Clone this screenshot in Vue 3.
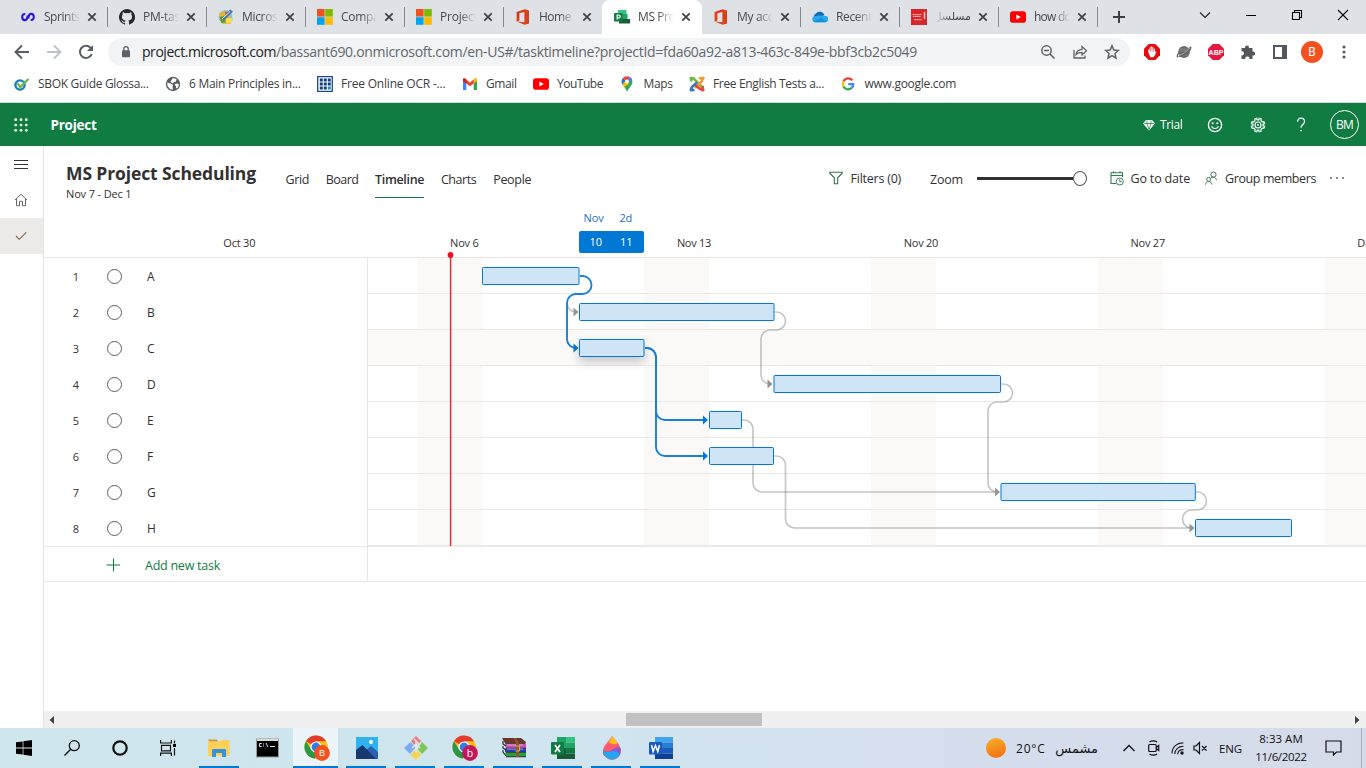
<script setup>
import { h } from 'vue'

/* Inner markup of the icons; every entry is [viewBox width, viewBox height, markup]. */
const ms = '<path fill="#f25022" d="M0 0h7.6v7.6H0z"/><path fill="#7fba00" d="M8.2 0h7.6v7.6H8.2z"/><path fill="#00a4ef" d="M0 8.2h7.6v7.6H0z"/><path fill="#ffb900" d="M8.2 8.2h7.6v7.6H8.2z"/>'
const yt = '<rect x="0" y="2.3" width="16" height="11.4" rx="2.8" fill="#f00"/><path fill="#fff" d="M6.4 5.4v5.2L10.8 8z"/>'
const office = '<path fill="#dc3e15" d="M9.6.2 1.6 3v9.8l2.8-1.2V4.2l5-1.2v10.3l-7.6-.9 7.8 3.4 4.4-1.3V1.5z"/>'
const chrome = '<circle cx="12" cy="12" r="11.6" fill="#fbc116"/><path fill="#e33b2e" d="M12 12 2 6.2A11.6 11.6 0 0 1 22.2 6.4H12z"/><path fill="#279847" d="M2 6.2A11.6 11.6 0 0 0 11 23.6L16.8 14 12 12 7.2 14.8z"/><path fill="#fbc116" d="M12 6.4h10.2A11.6 11.6 0 0 1 11 23.6L16.8 14z"/><circle cx="12" cy="12" r="5.6" fill="#fff"/><circle cx="12" cy="12" r="4.4" fill="#2f7de9"/>'
const icons = {
  sprints: [16, 16, '<g fill="none" stroke="#2a16e0" stroke-width="2.100"><path d="M5.300 5C3 4.900 2.200 6 2.200 8s.8 3.100 2.500 3.100c1.500 0 2.200-.8 2.500-2.100l.6-2.500"/><path d="M10.700 11c2.300.1 3.100-1 3.100-3s-.8-3.100-2.500-3.100c-1.500 0-2.200.8-2.500 2.100l-.6 2.500"/></g>'],
  github: [16, 16, '<path fill="#24292f" d="M8 0a8 8 0 0 0-2.530 15.590c.4.070.55-.17.55-.38v-1.340c-2.230.48-2.700-1.070-2.700-1.070-.36-.92-.89-1.170-.89-1.170-.73-.5.050-.49.050-.49.810.060 1.230.83 1.230.83.720 1.230 1.880.87 2.340.67.070-.52.280-.88.500-1.080-1.780-.2-3.640-.89-3.640-3.950 0-.87.310-1.590.820-2.150-.080-.2-.360-1.020.080-2.120 0 0 .67-.21 2.200.82a7.600 7.600 0 0 1 4 0c1.530-1.040 2.200-.82 2.200-.82.440 1.100.160 1.920.080 2.120.510.560.820 1.270.820 2.150 0 3.070-1.870 3.750-3.650 3.950.290.250.540.730.540 1.480v2.190c0 .21.150.46.550.38A8 8 0 0 0 8 0z"/>'],
  msold: [16, 16, '<circle cx="7.500" cy="8" r="6.900" fill="#7cc7ee"/><path fill="#e9b32c" d="M1 4 8 2l5 3-2 3 4 2-3 5-8-.5-2-4.500z"/><path fill="#5b9d34" d="m1.500 8 5-1 1 6.500-4 .5z"/><path fill="#d7483a" d="m7 2.500 4 1-3 4z"/><path d="m4 10 8-9.500 3 2-8.500 8.500z" fill="#3b76b5"/><path d="m4 10 8-7.500" stroke="#e6f4fb" stroke-width="1"/><path fill="#f7dc5a" d="m8 9.500 6-.5.5 4-6 2z"/>'],
  ms: [16, 16, ms],
  office: [16, 16, office],
  project: [16, 16, '<path fill="#31c685" d="M4 1h8.500v5H4z"/><path fill="#21a366" d="M6 5h7.500v5H6z"/><path fill="#185c37" d="M5 10h11v4.500H5z"/><rect y="4" width="8.500" height="8.500" rx=".8" fill="#107c41"/><path d="M3.200 10.400V6h1.600a1.300 1.300 0 0 1 0 2.800H3.200" fill="none" stroke="#fff" stroke-width="1.200"/>'],
  onedrive: [16, 16, '<path fill="#0f6cbd" d="M3 11a4 4 0 0 1 1-6.500A5 5 0 0 1 12.500 6z"/><path fill="#28a8ea" d="M2.800 13.300A3 3 0 0 1 2 7.600l5-1 7 .4a3.200 3.200 0 0 1-.8 6.300z"/><path fill="#1490df" d="m2.800 13.300-1.400-.6L9 9l5.500 3.800-1.300.5z"/>'],
  red: [16, 16, '<path fill="#d8262c" d="M0 0h16v16H0z"/><path d="M1.500 5.500h9M2 7.300h8M3.500 10.700h7.500" stroke="#f5b5b0" stroke-width="1.200" stroke-dasharray="1.500 .4"/><path d="M13.500 3v7" stroke="#f8d7a8" stroke-width="1.500"/>'],
  youtube: [16, 16, yt],
  close: [10, 10, '<path d="m1.300 1.300 7.400 7.400M8.700 1.300 1.300 8.700" stroke="#3c4043" stroke-width="1.700"/>'],
  plus: [14, 14, '<path d="M7 1v12M1 7h12" stroke="#3c4043" stroke-width="2"/>'],
  chevDown: [12, 12, '<path d="m1 3.500 5 5 5-5" fill="none" stroke="#222" stroke-width="1.100"/>'],
  min: [12, 12, '<path d="M1 6.500h10" stroke="#000"/>'],
  restore: [12, 12, '<path d="M1.500 3.500h7v7h-7zM3.500 3.500v-2h7v7h-2" fill="none" stroke="#000" stroke-width="1.100"/>'],
  winClose: [12, 12, '<path d="m1 1 10 10M11 1 1 11" stroke="#000" stroke-width="1.100"/>'],
  back: [16, 16, '<path d="M15 8H2M8 1.500 1.500 8 8 14.500" fill="none" stroke="#5a5e63" stroke-width="1.900"/>'],
  forward: [16, 16, '<path d="M1 8h13M8 1.500 14.500 8 8 14.500" fill="none" stroke="#bdc1c5" stroke-width="1.800"/>'],
  reload: [16, 16, '<path d="M13.700 10.200A6.100 6.100 0 1 1 12.600 3.800L14 5.500" fill="none" stroke="#5a5e63" stroke-width="2"/><path fill="#5a5e63" d="M15 1v6H9z"/>'],
  lock: [12, 14, '<rect x="2" y="5.300" width="8" height="7" rx="1" fill="#5f6368"/><path d="M3.800 6V3.800a2.200 2.200 0 0 1 4.400 0V6" fill="none" stroke="#5f6368" stroke-width="1.300"/>'],
  zoomOut: [16, 16, '<circle cx="6.500" cy="6.500" r="4.700" fill="none" stroke="#5f6368" stroke-width="1.500"/><path d="m10 10 4.500 4.500M4 6.500h5" stroke="#5f6368" stroke-width="1.600"/>'],
  share: [16, 16, '<path d="M2 6v8h11v-2.500" fill="none" stroke="#5f6368" stroke-width="1.300"/><path d="M4 10.500c.5-3.500 2.500-5 6-5.200V2.500l4.500 4.300L10 11V8.300c-2.500 0-4.500.5-6 2.200z" fill="none" stroke="#5f6368" stroke-width="1.200"/>'],
  star: [16, 16, '<path d="m8 1.800 1.800 4.300 4.600.4-3.500 3 1.100 4.600-4-2.500-4 2.500 1.100-4.600-3.500-3 4.600-.4z" fill="none" stroke="#5f6368" stroke-width="1.500"/>'],
  adblock: [16, 16, '<path fill="#e30b0b" d="M4.700 0h6.600L16 4.700v6.600L11.300 16H4.700L0 11.300V4.700z"/><path fill="#fff" d="M4.300 8V5.500h1.300V3.500h1.300v-1h1.400v1h1.400v1.200H11V8l1.700-.7-1.800 4-1.500 2H6.300z"/><path d="M6.500 4v3.500M8 3.500v4M9.500 4v3.500" stroke="#e30b0b" stroke-width=".5"/>'],
  planet: [16, 16, '<circle cx="8" cy="8" r="5.900" fill="#6b6b6b"/><path d="M4 5h8M3 7h9M4 11h8" stroke="#858585" stroke-width="1"/><path d="M2.500 12.500C0 14 1.500 10 3 9M13.500 3.500C16 2 14.500 6 13 7M3 12.500c4-.5 9-4 10.500-8" fill="none" stroke="#5e5e5e" stroke-width="1.200"/><path d="M2.500 11.300c4-.5 8.500-3.500 10.500-6.800" fill="none" stroke="#c4c4c4" stroke-width=".6"/>'],
  abp: [16, 16, '<path fill="#e91641" d="M4.700 0h6.600L16 4.700v6.600L11.300 16H4.700L0 11.300V4.700z"/><text x="8" y="10.600" font-family="Liberation Sans,sans-serif" font-weight="700" font-size="7" text-anchor="middle" fill="#fff">ABP</text>'],
  puzzle: [16, 16, '<path fill="#54585d" d="M1.500 4h3.600a2 2 0 1 1 3.800 0h3.600v3.700a2 2 0 1 1 0 3.800V15H9.300a2 2 0 1 0-3.900 0H1.500v-3.700a2 2 0 1 0 0-3.900z"/>'],
  panel: [16, 16, '<path d="M2 2h12v12H2z" fill="none" stroke="#54585d" stroke-width="2"/><path fill="#54585d" d="M10 2h4v12h-4z"/>'],
  menuDots: [16, 16, '<g fill="#54585d"><circle cx="8" cy="3" r="1.500"/><circle cx="8" cy="8" r="1.500"/><circle cx="8" cy="13" r="1.500"/></g>'],
  sbok: [16, 16, '<circle cx="6" cy="9" r="4.600" fill="none" stroke="#1c7bb9" stroke-width="2.400"/><path d="m3.500 7.500 2.800 3.500L14.500 3" fill="none" stroke="#65b946" stroke-width="2.200"/>'],
  globe: [16, 16, '<circle cx="8" cy="8" r="7.200" fill="#5a5d61"/><path fill="#fff" d="M2.200 6.500 5.500 7.500 8 9l-.5 2 .5 2.800-3-.8L2.500 10zM8 2l3.500 1-.5 2.500L9 6l-1 1.500L5.500 6l1-2zM9.500 8l3-.5 1.500 1-1 3-2 1V10.500z"/>'],
  ocr: [16, 16, '<path fill="#fff" stroke="#1b4b8f" stroke-width="1.300" d="M.7.700h14.600v14.600H.7z"/><path fill="#123f7c" d="M2.800 2.500h3v3h-3zm4 0h3v3h-3zm4 0h3v3h-3zm-8 4h3v3h-3zm4 0h3v3h-3zm4 0h3v3h-3zm-8 4h3v3h-3zm4 0h3v3h-3z"/><path fill="#24978f" d="M10.800 10.500h3v3h-3z"/>'],
  gmail: [16, 16, '<path fill="#4285f4" d="M1 14V4.500l3.300 2.500v7z"/><path fill="#34a853" d="M11.700 14V7L15 4.500V14z"/><path fill="#ea4335" d="M1 5V3.200L2.700 2.300 8 6.500l5.300-4.200L15 3.200V5L8 10.300z"/><path fill="#c5221f" d="M1 3.500c0-1.600 1.600-1.600 2.300-.8l1 .8V7.500L1 5z"/><path fill="#fbbc04" d="M15 3.500c0-1.600-1.600-1.600-2.300-.8l-1 .8v4L15 5z"/>'],
  maps: [16, 16, '<path fill="#34a853" d="M8 16c-.7-2-1.400-3.500-3-5.200L12.800 3.200c1.400 3 .3 5.200-1.300 7.300C9.800 12.700 8.800 14 8 16z"/><path fill="#fbbc04" d="M5 10.800 3 8l5-4 2.200 4z"/><path fill="#1a73e8" d="m3.800 2 3 2.500-3.500 4C2 6 2.500 3.500 3.800 2z"/><path fill="#4285f4" d="M8 4.500 11.200 1c1 .6 1.600 1.500 2 2.700L9.500 7.500z"/><path fill="#ea4335" d="M3.800 2.100C5.500 0 9-.5 11.300 1L7.500 5z"/><circle cx="8" cy="5.500" r="1.900" fill="#fff"/>'],
  joomla: [16, 16, '<g fill="none" stroke-width="2.600"><path d="M2.500 5.500c-1-2.500 1.500-4 3-2.200L13 11" stroke="#73b843"/><path d="M10 2.500c2.500-1 4 1 3 2.500L6 12" stroke="#f29c32"/><path d="m6 9 4.500 3.500c1.500 1.500 4-.2 3-2.500" stroke="#e74838"/><path d="M8 6.500 3 11c-1.500 1.500.2 3.700 2.500 2.800" stroke="#3c79bd"/></g><g><circle cx="2.300" cy="2.300" r="1.900" fill="#73b843"/><circle cx="13.700" cy="2.300" r="1.900" fill="#f29c32"/><circle cx="2.300" cy="13.700" r="1.900" fill="#3c79bd"/><circle cx="13.700" cy="13.700" r="1.900" fill="#e74838"/></g>'],
  google: [16, 16, '<g fill="none" stroke-width="2.300"><path d="M12.300 4.300A5.200 5.200 0 0 0 3.500 5.400" stroke="#ea4335"/><path d="M3.500 5.400a5.200 5.200 0 0 0 0 5.200" stroke="#fbbc04"/><path d="M3.500 10.600a5.200 5.200 0 0 0 8.200 1.300" stroke="#34a853"/><path d="M11.700 11.900A5.200 5.200 0 0 0 13.200 8.200H8.200" stroke="#4285f4"/></g>'],
  waffle: [14, 14, '<g fill="#fff"><circle cx="1.700" cy="1.700" r="1.350"/><circle cx="7" cy="1.700" r="1.350"/><circle cx="12.300" cy="1.700" r="1.350"/><circle cx="1.700" cy="7" r="1.350"/><circle cx="7" cy="7" r="1.350"/><circle cx="12.300" cy="7" r="1.350"/><circle cx="1.700" cy="12.300" r="1.350"/><circle cx="7" cy="12.300" r="1.350"/><circle cx="12.300" cy="12.300" r="1.350"/></g>'],
  diamond: [12, 12, '<path fill="#fff" d="M3 1h6l3 3.500L6 11.500 0 4.500z"/><path d="M1 4.500h10M4 1.500l0 3 2 6 2-6v-3" fill="none" stroke="#107c41" stroke-width=".7"/>'],
  smile: [16, 16, '<circle cx="8" cy="8" r="6.600" fill="none" stroke="#fff" stroke-width="1.300"/><circle cx="5.700" cy="6.200" r="1" fill="#fff"/><circle cx="10.300" cy="6.200" r="1" fill="#fff"/><path d="M4.500 9.300c1.500 2.900 5.500 2.900 7 0" fill="none" stroke="#fff" stroke-width="1.200"/>'],
  gear: [16, 16, '<path d="m6.800 1.300.4 1.600h1.600l.4-1.600 1.900.6-.1 1.700 1.200 1.200 1.700-.1.700 1.900-1.600.5v1.700l1.600.5-.7 1.900-1.700-.1-1.200 1.200.1 1.700-1.900.7-.5-1.600H7.300l-.5 1.600-1.900-.7.100-1.700-1.200-1.200-1.700.1-.7-1.900 1.600-.5V7.100l-1.600-.5.700-1.900 1.700.1L5 3.600l-.1-1.700z" fill="none" stroke="#fff" stroke-width="1.200"/><circle cx="8" cy="8" r="3" fill="none" stroke="#fff" stroke-width="1.100"/><circle cx="8" cy="8" r=".9" fill="#fff"/>'],
  help: [12, 16, '<path d="M2.600 4.800C2.600 2.500 4 1.200 6 1.200S9.500 2.500 9.500 4.500C9.500 7.500 6 7.500 6 10.800" fill="none" stroke="#fff" stroke-width="1.200"/><circle cx="6" cy="13.600" r=".9" fill="#fff"/>'],
  burger: [14, 12, '<path d="M0 2.500h14M0 6.500h14M0 10.500h14" stroke="#333" stroke-width="1"/>'],
  home: [14, 14, '<path d="M1 7 7 1.300 13 7M2.500 6v6.700h3V8.300h3v4.400h3V6" fill="none" stroke="#666" stroke-width="1"/>'],
  check: [12, 10, '<path d="m1 5 3.300 3.300L11.300 1.300" fill="none" stroke="#7a6248" stroke-width="1.100"/>'],
  filter: [14, 14, '<path d="M.8 1.200h12.400v1L8.700 6.800v6H5.300v-6L.8 2.200z" fill="none" stroke="#34724e" stroke-width="1.100"/>'],
  calendar: [14, 15, '<path d="M6 12.500H1V1.700h11.500V6M1 4.500h11.500M3.500.3v2M10 .3v2" fill="none" stroke="#2f7d52" stroke-width="1.100"/><circle cx="9.800" cy="10.500" r="3.500" fill="#fff" stroke="#3d7d5a" stroke-width="1"/><path d="M9.800 8.300v2.400h1.800" fill="none" stroke="#3d7d5a"/>'],
  people: [12, 14, '<g fill="none" stroke="#3f7658" stroke-width="1"><circle cx="8.500" cy="3.600" r="2.600"/><path d="M6 6.800c2.500-1.500 5-.3 5.500 2.500"/><circle cx="3.700" cy="8.400" r="2"/><path d="M.5 13.500c.3-4 6-4 6.300 0"/></g>'],
  arrL: [5, 8, '<path fill="#444" d="M5 0v8L.5 4z"/>'],
  arrR: [5, 8, '<path fill="#444" d="M0 0v8l4.500-4z"/>'],
  win: [16, 16, '<path d="M0 2.300 6.700 1.400v6.200H0zM7.400 1.300 16 0v7.600H7.400zM0 8.400h6.700v6.200L0 13.700zM7.400 8.400H16V16l-8.600-1.200z"/>'],
  search: [16, 16, '<circle cx="10.300" cy="5.700" r="5" fill="none" stroke="#111" stroke-width="1.300"/><path d="M6.700 9.300.5 15.500" stroke="#111" stroke-width="1.400"/>'],
  cortana: [16, 16, '<circle cx="8" cy="8" r="6.700" fill="none" stroke="#111" stroke-width="2.200"/>'],
  taskview: [16, 16, '<path d="M.6 0v3h10.800V0M1.500 5.300h9v5.500h-9zM.6 16v-2.800h10.800V16M14.500.5v3M14.500 8v7.500" fill="none" stroke="#111" stroke-width="1.200"/><path d="M13 4h3v3h-3z"/>'],
  explorer: [22, 20, '<path fill="#d99a13" d="M0 1.500h9l1.500 2h-9.500z"/><path fill="#fcd059" d="M0 4h11l1.500-2H21.500V18H0z"/><path fill="#3394dc" d="M4 12.500c0-1 .5-1.500 1.500-1.500h11c1 0 1.500.5 1.500 1.500V19h-4v-4H8v4H4z"/>'],
  cmd: [23, 20, '<path fill="#999" d="M0 .5h23v19H0z"/><path d="M1 3h21v15.500H1z"/><path fill="#d9d9d9" d="M1 1h21v2H1z"/><path d="M5.700 5.500H3.500v3h2.200M7.500 5.500v1M7.500 7.500v1M10 5l2 4M14 8.500h5" fill="none" stroke="#ddd" stroke-width="1"/>'],
  chromeB: [26, 26, chrome + '<circle cx="18" cy="18" r="7.900" fill="#f4511e"/><text x="18" y="21.200" font-family="Liberation Sans,sans-serif" font-size="9" text-anchor="middle" fill="#fff">B</text>'],
  chromeb: [26, 26, chrome + '<circle cx="18" cy="18" r="7.900" fill="#c2185b"/><text x="18" y="21.500" font-family="Open Sans,sans-serif" font-size="10.500" text-anchor="middle" fill="#fff">b</text>'],
  photos: [22, 22, '<path fill="#30b2ef" d="M0 0h22v22H0z"/><path fill="#2f5fb2" d="m10 13 5-4 7 6v7H10z"/><path fill="#18396f" d="m0 13 6.500-5L20 22H0z"/><circle cx="15" cy="5" r="2" fill="#fff"/>'],
  git: [24, 24, '<g><path fill="#f2797a" d="m12 0 5 5-4.500 5H11L7 5z"/><path fill="#7cabf5" d="m6.500 6 5 5.500L6 18 0 12z"/><path fill="#7dc855" d="m18 6 6 6-6 6-4-4.500 1-3.500z"/><path fill="#f6d353" d="m12 12.500 5 6.500-5 5-5.500-5z"/><path d="m10 3 6 6M12 6v11M8 12l4-4 4 4" fill="none" stroke="#dfeaf0" stroke-width="1.500"/></g>'],
  winrar: [24, 20, '<path fill="#68372b" d="M0 0h19l5 4-1 3H4z"/><path fill="#c652b6" d="M3 6h21v4H4z"/><path fill="#2941c8" d="M3 10.500h21v3.500H3z"/><path fill="#22a332" d="M3 14.500h21v4H4z"/><path d="M1 3v3l3 2M1 8v2l3 2M1 12v2l3 4M4 10.300h20M4 14.300h20M4 18.800h20" fill="none" stroke="#222" stroke-width="1.100"/><path d="M5 7h16M5 11h16" stroke="#e9c0e0" stroke-width=".7"/><path fill="#8a5830" d="m12 0 2 0 3 5v14h-3V6z"/><path d="M13.500 8h4v5h-4" fill="none" stroke="#d5b048"/>'],
  excel: [24, 22, '<path fill="#21a366" d="M6 0h9v11H6z"/><path fill="#33c481" d="M15 0h9v5.500h-9z"/><path fill="#21a366" d="M15 5.500h9V11h-9z"/><path fill="#107c41" d="M15 11h9v5.500h-9z"/><path fill="#185c37" d="M6 11h9v5.500h9V22H6z"/><rect y="5" width="13" height="12.500" rx="1" fill="#107c41"/><path d="m4 8 5 7M9 8l-5 7" stroke="#fff" stroke-width="1.700"/>'],
  paint: [20, 24, '<path fill="#ff5b6d" d="M10 0c3 4 9 9 9 15a9 9 0 0 1-18 0C1 9 8 5 10 0z"/><path fill="#ffc40c" d="M10 0c2 3 4 4.500 5.500 7-3 2.500-6 .5-9-.5C8 4.500 9.500 2.500 10 0z"/><path fill="#8b58cc" d="M18.800 13c-2-4-6-1-9 1-3 2-6 2-8.800 0 0 3 0 4 1 6l16-1z"/><path fill="#21a6f2" d="M1 14.500c4 3 7 1 10 .5 3 0 5 1 7 3.500A9 9 0 0 1 1 14.500z"/>'],
  word: [24, 22, '<path fill="#41a5ee" d="M6 0h18v5.500H6z"/><path fill="#2b7cd3" d="M6 5.500h18V11H6z"/><path fill="#185abd" d="M6 11h18v5.500H6z"/><path fill="#103f91" d="M6 16.500h18V22H6z"/><rect y="5" width="13" height="12.500" rx="1" fill="#185abd"/><path d="m2.500 8 1.600 6.500L6.500 8.500l2.300 6L10.500 8" fill="none" stroke="#fff" stroke-width="1.500"/>'],
  chevUp: [14, 14, '<path d="M1.500 10 7 4.500l5.500 5.500" fill="none" stroke="#111" stroke-width="1.300"/>'],
  meet: [14, 16, '<g fill="none" stroke="#111" stroke-width="1.200"><rect x="1.700" y="4.500" width="7.500" height="7" rx="1"/><path d="M9.200 7.500 11.700 5.500v5L9.200 8.500M2.500 2C4.500.5 8 .5 10 2M2.500 14c2 1.500 5.500 1.500 7.500 0"/></g>'],
  wifi: [14, 14, '<g fill="none" stroke="#222" stroke-width="1.200"><path d="M1 12.500C1 6 6 1.500 12.500 2M3.800 13c0-4.500 4-8 8.700-7.500M6.700 13.300c0-3 2.300-5 5.800-4.700"/></g><circle cx="11" cy="12" r="1.700" fill="#111"/>'],
  mute: [15, 14, '<path d="M1 5v4h2l3.500 3.500v-11L3 5zM9 5l4.500 4.500M13.500 5 9 9.500" fill="none" stroke="#111" stroke-width="1.200"/>'],
  notif: [17, 16, '<path d="M1 1h15v11h-4.500L8.500 15v-3H1z" fill="none" stroke="#111" stroke-width="1.200"/>'],
  add: [14, 14, '<path d="M7.500 .5v13M.5 7h13.500" stroke="#107c41" stroke-width="1"/>'],
}

const Icon = ({ name, w }) => {
  const [vw, vh, body] = icons[name]
  const width = w || vw
  return h('svg', { viewBox: `0 0 ${vw} ${vh}`, width, height: (width * vh) / vw, innerHTML: body })
}
Icon.props = ['name', 'w']

/* Tracks a label so that it takes exactly the given number of pixels. */
const vFit = {
  mounted(el, { value }) {
    const range = document.createRange()
    range.selectNodeContents(el)
    const gap = value - range.getBoundingClientRect().width
    el.style.letterSpacing = `${gap / el.textContent.length}px`
  },
}

const tabs = [
  ['sprints', 'Sprints', 36], ['github', 'PM-task', 43], ['msold', 'Microsoft', 50], ['ms', 'Company', 51], ['ms', 'Project', 37.500],
  ['office', 'Home', 32], ['project', 'MS Proj', 40], ['office', 'My acco', 43], ['onedrive', 'Recent', 36], ['red', 'مسلسل', 0], ['youtube', 'how do', 37],
]
const bookmarks = [
  ['sbok', 'SBOK Guide Glossa...', 110.5], ['globe', '6 Main Principles in...', 111.5], ['ocr', 'Free Online OCR -...', 104.5], ['gmail', 'Gmail', 30.5],
  ['youtube', 'YouTube', 46], ['maps', 'Maps', 29], ['joomla', 'Free English Tests a...', 111], ['google', 'www.google.com', 91.5],
]
const views = [['Grid', 23.500], ['Board', 32.500], ['Timeline', 49], ['Charts', 35.500], ['People', 38]]
const weeks = [['Oct 30', 32], ['Nov 6', 28.500], ['Nov 13', 34], ['Nov 20', 34.500], ['Nov 27', 34.500], ['Dec 4', 29]]
const tasks = ['A', 'B', 'C', 'D', 'E', 'F', 'G', 'H']
const weekends = [417.500, 644.200, 871, 1097.800, 1324.700]
const bars = [[482.5, 96.5], [579.5, 194.5], [579.5, 64.5], [774, 226.5], [709.500, 32], [709.500, 64], [1001, 194.300], [1195.500, 96]]
const links = [
  'M775 312h1.500a9 9 0 0 1 0 18H770a9 9 0 0 0-9 9V375a9 9 0 0 0 9 9',
  'M567 303a9 9 0 0 0 9 9',
  'M1001 384h2.500a9 9 0 0 1 0 18H997a9 9 0 0 0-9 9V483a9 9 0 0 0 9 9',
  'M742 420h2a9 9 0 0 1 9 9V483a9 9 0 0 0 9 9H997',
  'M774 456h2.500a9 9 0 0 1 9 9V519a9 9 0 0 0 9 9H1190',
  'M1196 492h1.500a9 9 0 0 1 0 18H1191.500a9 9 0 0 0 0 18',
]
const activeLinks = [
  'M580 276h2.500a9 9 0 0 1 0 18H576a9 9 0 0 0-9 9V339a9 9 0 0 0 9 9',
  'M645 348h2.500a9 9 0 0 1 8.500 9V411a9 9 0 0 0 9 9H705',
  'M645 348h2.500a9 9 0 0 1 8.500 9V447a9 9 0 0 0 9 9H705',
]
const arrows = [[578.5, 312], [772.5, 384], [1000, 492], [1194.5, 528]]
const activeArrows = [[578.5, 348], [708, 420], [708, 456]]
const apps = [['explorer', 22, 1], ['cmd', 23, 0], ['chromeB', 26, 2], ['photos', 22, 1], ['git', 24, 1], ['chromeb', 26, 1], ['winrar', 24, 1], ['excel', 24, 1], ['paint', 20, 1], ['word', 24, 1]]
</script>

<template>
  <div class="screen">
    <header class="tabstrip">
      <div v-for="(t, i) in tabs" :key="i" class="tab" :class="{ active: i === 6, before: i === 5 }">
        <Icon class="fav" :name="t[0]" :w="16" />
        <span class="tab-title" :class="{ rtl: !t[2] }"><b v-if="t[2]" v-fit="t[2]">{{ t[1] }}</b><b v-else>{{ t[1] }}</b></span>
        <Icon name="close" />
      </div>
      <Icon class="newtab" name="plus" />
      <div class="wincontrols"><Icon name="chevDown" /><Icon name="min" /><Icon name="restore" /><Icon name="winClose" /></div>
    </header>

    <div class="toolbar">
      <div class="nav"><Icon name="back" /><Icon name="forward" /><Icon name="reload" /></div>
      <div class="omnibox">
        <Icon name="lock" />
        <span class="url"><b v-fit="134">project.microsoft.com</b><i v-fit="641">/bassant690.onmicrosoft.com/en-US#/tasktimeline?projectId=fda60a92-a813-463c-849e-bbf3cb2c5049</i></span>
        <span class="omni-icons"><Icon name="zoomOut" /><Icon name="share" /><Icon name="star" /></span>
      </div>
      <div class="ext">
        <Icon name="adblock" /><Icon name="planet" /><Icon name="abp" /><Icon name="puzzle" /><Icon name="panel" />
        <span class="profile">B</span><Icon name="menuDots" />
      </div>
    </div>

    <div class="bookmarks">
      <a v-for="b in bookmarks" :key="b[1]"><Icon :name="b[0]" :w="16" /><span v-fit="b[2]">{{ b[1] }}</span></a>
    </div>

    <div class="suite">
      <Icon name="waffle" />
      <strong v-fit="46">Project</strong>
      <span class="trial"><Icon name="diamond" /><span v-fit="22.5">Trial</span></span>
      <Icon name="smile" /><Icon name="gear" /><Icon name="help" class="s-help" />
      <span class="me"><span v-fit="17">BM</span></span>
    </div>

    <div class="body">
      <nav class="rail">
        <span><Icon name="burger" /></span><span><Icon name="home" /></span><span class="sel"><Icon name="check" /></span>
      </nav>
      <main>
        <div class="head">
          <div class="title">
            <h1 v-fit="190">MS Project Scheduling</h1>
            <p v-fit="65.5">Nov 7 - Dec 1</p>
          </div>
          <div class="views">
            <span v-for="v in views" :key="v[0]" :class="{ on: v[0] === 'Timeline' }"><b v-fit="v[1]">{{ v[0] }}</b></span>
          </div>
          <div class="actions">
            <Icon name="filter" /><span v-fit="50.5" class="a-filter">Filters (0)</span>
            <span v-fit="33" class="a-zoom">Zoom</span>
            <span class="slider"><i></i><u></u></span>
            <Icon name="calendar" /><span v-fit="59.5" class="a-date">Go to date</span>
            <Icon name="people" /><span v-fit="91" class="a-group">Group members</span>
            <span class="more"><i></i><i></i><i></i></span>
          </div>
        </div>

        <div class="scale">
          <span v-for="w in weeks" :key="w[0]"><b v-fit="w[1]">{{ w[0] }}</b></span>
          <div class="range">
            <div class="range-top"><b v-fit="20">Nov</b><b v-fit="12.5">2d</b></div>
            <div class="range-days"><b>10</b><b>11</b></div>
          </div>
        </div>

        <div class="plan">
          <div class="list">
            <div v-for="(t, i) in tasks" :key="t" class="task"><span class="num">{{ i + 1 }}</span><span class="ring"></span><span>{{ t }}</span></div>
            <div class="add"><Icon name="add" /><span v-fit="75">Add new task</span></div>
          </div>
          <div class="chart">
            <svg class="gantt" viewBox="368 258 998 324" width="998" height="324">
              <rect v-for="x in weekends" :key="x" :x="x" y="258" width="65" height="287" fill="#faf9f8" />
              <rect x="368" y="330" width="998" height="35" fill="#faf9f8" />
              <rect v-for="n in 7" :key="n" x="368" :y="257 + n * 36" width="998" height="1" fill="#eae9e8" />
              <rect x="368" y="545" width="998" height="2" fill="#eae9e8" />
              <g fill="none" stroke="#737373" stroke-opacity=".42" stroke-width="1.600">
                <path v-for="d in links" :key="d" :d="d" />
              </g>
              <path v-for="a in arrows" :key="a[0]" :d="`M${a[0]} ${a[1]}l-5-4.500v9z`" fill="#979593" />
              <g fill="none" stroke="#1a7fd9" stroke-width="1.900">
                <path v-for="d in activeLinks" :key="d" :d="d" />
              </g>
              <path v-for="a in activeArrows" :key="a[1]" :d="`M${a[0]} ${a[1]}l-5-4.500v9z`" fill="#0078d4" />
              <rect v-for="(b, i) in bars" :key="i" class="bar" :class="{ hot: i === 2 }" :x="b[0]" :y="267.5 + i * 36" :width="b[1]" height="17" rx="1" />
              <rect x="449.900" y="255" width="1.400" height="291" fill="#f0222d" />
              <circle cx="450.500" cy="255" r="2.900" fill="#e81123" />
            </svg>
          </div>
        </div>

        <div class="hscroll"><Icon name="arrL" /><i></i><Icon name="arrR" /></div>
      </main>
    </div>

    <footer class="taskbar">
      <div class="sys"><span><Icon name="win" /></span><span><Icon name="search" /></span><span><Icon name="cortana" /></span><span><Icon name="taskview" /></span></div>
      <div class="apps">
        <span v-for="a in apps" :key="a[0]" :class="['app', 'm' + a[2], a[0]]"><Icon :name="a[0]" :w="a[1]" /></span>
      </div>
      <div class="tray">
        <i class="sun"></i><span v-fit="29.5" class="temp">20°C</span><span class="ar">مشمس</span>
        <Icon name="chevUp" /><Icon name="meet" class="t-meet" /><Icon name="wifi" class="t-wifi" /><Icon name="mute" class="t-mute" />
        <span v-fit="23" class="lang">ENG</span>
        <span class="clock"><b v-fit="43.5">8:33 AM</b><b v-fit="51.5">11/6/2022</b></span>
        <Icon name="notif" class="t-notif" /><i class="peek"></i>
      </div>
    </footer>
  </div>
</template>

<style>
body { overflow: hidden; background: #fff; }
</style>

<style scoped>
.screen { width: 1366px; height: 768px; overflow: hidden; display: flex; flex-direction: column; background: #fff; font-family: "Open Sans", "Noto Sans", "DejaVu Sans", sans-serif; font-size: 12px; color: #323130; white-space: nowrap; }
.screen * { box-sizing: border-box; }
svg { flex: none; display: block; }
b, i, u { font-weight: inherit; font-style: normal; text-decoration: none; }

.tabstrip { height: 34px; flex: none; background: #dee1e6; display: flex; align-items: center; padding-left: 8px; }
.tab { position: relative; width: 99px; height: 34px; flex: none; display: flex; align-items: center; padding-left: 12px; color: #45494d; }
.tab::after { content: ""; width: 1px; height: 20px; background: #85888c; position: absolute; right: -1px; top: 7px; }
.tab.before::after, .tab.active::after { display: none; }
.tab.active { background: #fff; border-radius: 8px 8px 0 0; width: 100px; margin-left: 0; margin-right: -1px; }
.tab-title { width: 36px; margin-left: 8px; margin-right: 7px; overflow: hidden; line-height: 20px; -webkit-mask-image: linear-gradient(90deg, #000 55%, transparent 100%); mask-image: linear-gradient(90deg, #000 55%, transparent 100%); }
.tab-title.rtl { direction: rtl; font-family: "DejaVu Sans", sans-serif; font-size: 11px; -webkit-mask-image: linear-gradient(270deg, #000 55%, transparent 100%); mask-image: linear-gradient(270deg, #000 55%, transparent 100%); }
.newtab { margin-left: 15px; }
.wincontrols { display: flex; gap: 34px; margin-left: auto; margin-right: 17px; margin-bottom: 5px; }

.toolbar { height: 36px; flex: none; display: flex; align-items: center; padding-left: 14px; }
.nav { display: flex; gap: 16px; width: 94px; }
.omnibox { width: 1022px; height: 28px; border-radius: 14px; background: #f1f3f4; display: flex; align-items: center; padding-left: 12px; }
.url { margin-left: 10px; font-size: 14px; color: #63676b; line-height: 20px; }
.url b { color: #202124; }
.omni-icons { display: flex; gap: 16px; margin-left: auto; margin-right: 10px; }
.ext { display: flex; align-items: center; gap: 16px; margin-left: 14px; }
.profile { width: 22px; height: 22px; margin: 0 -3px; border-radius: 50%; background: #f4511e; color: #fff; font: 12px/22px Roboto, sans-serif; text-align: center; }

.bookmarks { height: 32px; flex: none; display: flex; align-items: center; gap: 16.500px; padding-left: 13.500px; padding-bottom: 4px; color: #3c4043; }
.bookmarks a { display: flex; align-items: center; gap: 8.500px; line-height: 18px; margin-right: -.5px; }

.suite { height: 44px; flex: none; border-top: 1px solid #d7dadd; background: #107c41; color: #fff; display: flex; align-items: center; padding-left: 14px; padding-right: 7px; }
.suite strong { font-size: 13.500px; font-weight: 700; margin-left: 22.500px; margin-right: auto; width: 52px; line-height: 20px; margin-top: 1px; }
.trial { display: flex; align-items: center; gap: 5px; width: 64px; }
.suite .me { width: 29px; height: 29px; border: 1px solid #fff; border-radius: 50%; display: flex; justify-content: center; align-items: center; margin-left: 23px; font-size: 12px; }
.suite > svg + svg { margin-left: 27px; }
.suite > svg + svg.s-help { margin-left: 29px; }

.body { flex: 1; display: flex; min-height: 0; }
.rail { width: 44px; border-right: 1px solid #e6e5e4; }
.rail span { display: flex; height: 36px; width: 43px; padding-right: 1px; align-items: center; justify-content: center; }
.rail .sel { background: #edebe9; }
main { flex: 1; min-width: 0; display: flex; flex-direction: column; }

.head { height: 60px; display: flex; padding-left: 22px; }
.title { width: 219.500px; padding-top: 15px; }
.title h1 { margin: 0; font-size: 17.500px; font-weight: 700; line-height: 24px; }
.title p { margin: 1px 0 0; font-size: 11px; line-height: 16px; }
.views { display: flex; gap: 16.800px; padding-top: 25px; font-size: 12.500px; line-height: 18px; }
.views span { height: 27px; }
.views .on { border-bottom: 1px solid #107c41; font-weight: 600; }
.actions { display: flex; align-items: center; height: 64px; margin-left: auto; font-size: 12.500px; }
.a-filter { margin-left: 7.500px; width: 79.500px; }
.a-zoom { width: 47px; margin-top: 2px; }
.slider { width: 110px; height: 15px; display: flex; align-items: center; margin-right: 23px; }
.slider i { flex: 1; height: 3px; background: #323130; }
.slider u { width: 14px; height: 15px; border: 1px solid #555; border-radius: 50%; }
.a-date { margin-left: 6.500px; width: 74.500px; }
.a-group { margin-left: 8px; width: 105px; }
.more { display: flex; gap: 4px; width: 14px; margin-right: 22px; }
.more i { width: 2px; height: 2px; border-radius: 50%; background: #666; }

.scale { position: relative; height: 52px; display: flex; padding-left: 179.300px; overflow: hidden; border-bottom: 1px solid #e6e5e4; }
.scale > span { width: 226.800px; flex: none; font-size: 11px; line-height: 16px; padding-top: 29px; }
.range { position: absolute; left: 534.500px; top: 4px; width: 65px; color: #2670c8; font-size: 11px; }
.range-top { display: flex; padding-left: 5px; gap: 16px; line-height: 16px; }
.range-days { height: 22px; margin-top: 5px; border-radius: 2px; background: #0078d4; color: #fff; display: flex; justify-content: space-around; padding: 0 2px; line-height: 21px; }

.plan { display: flex; height: 324px; flex: none; border-bottom: 1px solid #eae9e8; }
.list { width: 324px; flex: none; border-right: 1px solid #e6e5e4; }
.task { height: 36px; display: flex; align-items: center; padding: 1px 0 0 24px; line-height: 17px; }
.num { width: 16px; text-align: center; font-size: 11px; margin-right: 23px; }
.ring { width: 15px; height: 15px; border: 1px solid #5f5e5c; border-radius: 50%; margin-right: 25px; }
.add { height: 36px; display: flex; align-items: center; gap: 25px; padding-left: 62px; padding-top: 1px; border-top: 1px solid #eae9e8; font-size: 12.500px; color: #107c41; }
.chart { flex: 1; min-width: 0; }
.gantt { overflow: visible; position: relative; }
.bar { fill: #cfe5f5; stroke: #0078d4; stroke-width: 1; }
.hot { filter: drop-shadow(0 5px 5px rgba(0, 0, 0, .2)); }

.hscroll { margin-top: auto; height: 17px; background: #f0f0f0; display: flex; align-items: center; padding: 0 6px 0 5px; justify-content: space-between; }
.hscroll i { width: 136px; height: 13px; background: #c1c1c1; margin-right: 21px; }

.taskbar { height: 40px; flex: none; background: linear-gradient(90deg, #cfe6ed 0, #d0e5ef 45%, #d4deed 64%, #d5dbe9 100%); display: flex; color: #111; }
.sys { display: flex; width: 195px; }
.sys span { width: 48px; display: flex; align-items: center; justify-content: center; }
.apps { display: flex; }
.app { width: 49px; height: 40px; display: flex; align-items: center; justify-content: center; position: relative; }
.app.explorer { width: 48px; }
.app.cmd { width: 48px; margin-right: 2px; }
.app.m1::after, .app.m2::after { content: ""; position: absolute; left: 4px; right: 5px; bottom: 0; height: 2px; background: #0078d7; }
.app.explorer::after { right: 4px; }
.app.m2 { background: #ebf4f8; background-clip: padding-box; width: 49px; border-right: 4px solid #cfe3ec; padding-left: 3px; }
.app.m2::after { left: 0; right: 0; }
.tray { margin-left: auto; display: flex; align-items: center; }
.sun { width: 20px; height: 20px; border-radius: 50%; background: linear-gradient(160deg, #f6b32c, #f3680c); }
.temp { margin-left: 10px; width: 38px; }
.ar { font-family: "DejaVu Sans", sans-serif; font-size: 13px; width: 44px; margin-right: 24px; direction: rtl; }
.t-meet { margin-left: 11px; }
.t-wifi { margin-left: 10px; }
.t-mute { margin-left: 8px; }
.lang { width: 23px; margin-left: 11px; font-size: 11.500px; }
.clock { display: flex; flex-direction: column; align-items: center; width: 52px; margin-left: 13px; line-height: 18px; font-size: 11.500px; }
.t-notif { margin-left: 18px; }
.peek { width: 1px; height: 40px; background: #a8afbb; margin: 0 4px 0 19px; }
</style>
